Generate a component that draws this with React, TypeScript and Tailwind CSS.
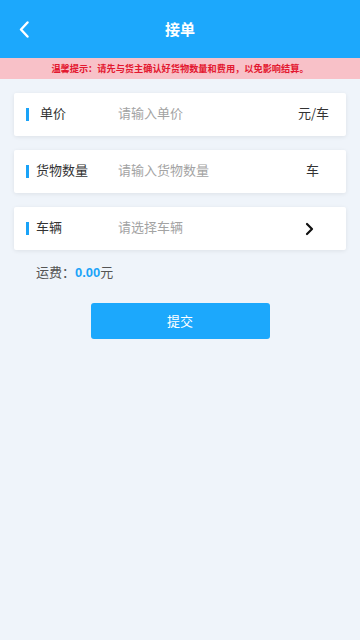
import { ReactNode } from "react";

function Row({ label, placeholder, right, labelClass = "pl-[10px]" }: { label: string; placeholder: string; right: ReactNode; labelClass?: string }) {
  return (
    <div className="mx-[14px] flex h-[43px] items-center rounded-[2px] bg-white pl-[12px] pr-[17px] pb-[3px] shadow-[0_1px_4px_rgba(0,0,0,0.08)]">
      <span className="mt-[3px] h-[13px] w-[3px] bg-[#1aa3f8]" />
      <span className={`w-[89px] text-[13px] text-[#333] ${labelClass}`}>{label}</span>
      <span className="flex-1 text-[13px] text-[#a3a3a3]">{placeholder}</span>
      {right}
    </div>
  );
}

export default function App() {
  return (
    <div
      className="flex min-h-[640px] w-[360px] flex-col bg-[#eff4fa]"
      style={{ fontFamily: '"Noto Sans CJK SC", "Noto Sans", sans-serif' }}
    >
      <header className="relative flex h-[58px] items-center justify-center bg-[#1ca8fc]">
        <svg className="absolute left-[18px] top-[21px]" width="12" height="17" viewBox="0 0 12 17" fill="none">
          <path d="M9.5 1.5 L3 8.5 L9.5 15.5" stroke="white" strokeWidth="2.4" strokeLinecap="round" strokeLinejoin="round" />
        </svg>
        <span className="text-[15px] font-bold text-white">接单</span>
      </header>
      <div className="flex h-[21px] items-center justify-center bg-[#f8c1c8] text-[9.2px] font-bold text-[#e3172f]">
        温馨提示：请先与货主确认好货物数量和费用，以免影响结算。
      </div>

      <div className="mt-[14px] flex flex-col gap-[14px]">
        <Row
          label="单价"
          placeholder="请输入单价"
          labelClass="pl-[11px]"
          right={<span className="text-[13px] text-[#333]">元/车</span>}
        />
        <Row
          label="货物数量"
          placeholder="请输入货物数量"
          labelClass="pl-[7px]"
          right={<span className="mr-[10px] text-[13px] text-[#333]">车</span>}
        />
        <Row
          label="车辆"
          placeholder="请选择车辆"
          labelClass="pl-[7px]"
          right={
            <svg className="mr-[15px] mt-[3px]" width="9" height="14" viewBox="0 0 9 14" fill="none">
              <path d="M2 2 L7 7 L2 12" stroke="#111" strokeWidth="2.2" strokeLinecap="round" strokeLinejoin="round" />
            </svg>
          }
        />
      </div>

      <div className="mt-[12px] pl-[36px] text-[13px] text-[#555]">
        运费：<span className="font-bold text-[#1aa3f8]" style={{ fontFamily: '"Liberation Sans", "Noto Sans CJK SC", sans-serif' }}>0.00</span>元
      </div>

      <div className="mt-[20px] flex justify-center">
        <button className="h-[36px] w-[179px] rounded-[3px] bg-[#1ca8fc] text-[13px] text-white">提交</button>
      </div>
    </div>
  );
}
